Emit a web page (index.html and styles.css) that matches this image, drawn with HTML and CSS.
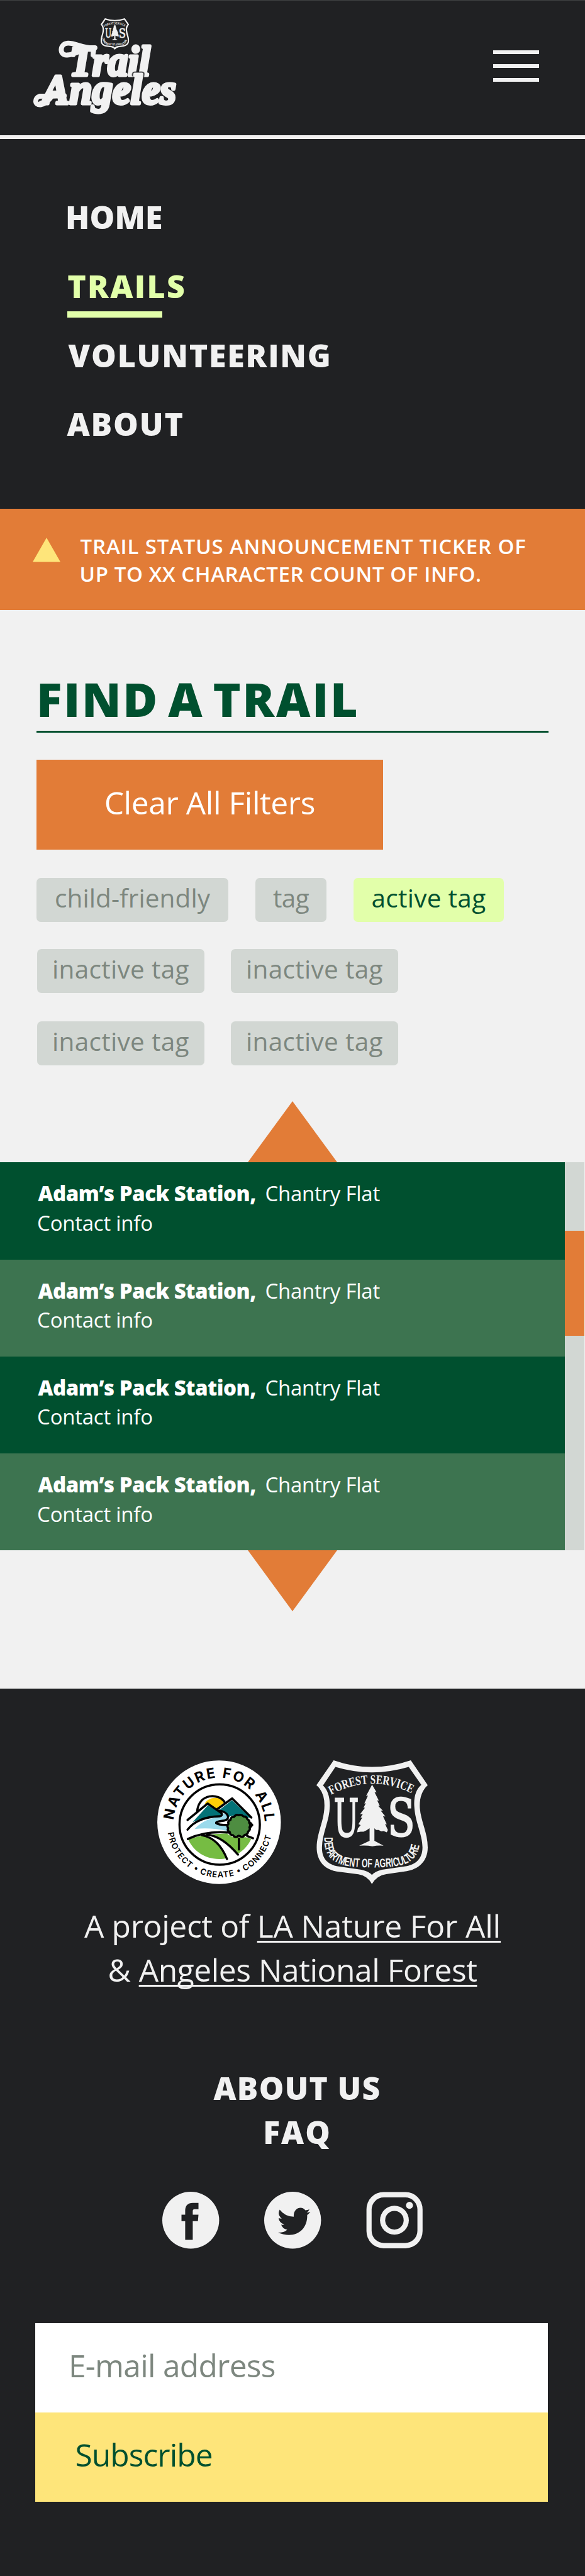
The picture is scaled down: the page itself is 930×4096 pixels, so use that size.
FILE: index.html
```html
<!DOCTYPE html>
<html lang="en">
<head>
<meta charset="utf-8">
<title>Trail Angeles</title>
<link rel="stylesheet" href="styles.css">
</head>
<body>
<svg class="defs" aria-hidden="true">
  <symbol id="shield" viewBox="122 104 762 846" preserveAspectRatio="none">
    <path fill-rule="evenodd" d="M240 104Q500 195 768 104L884 274Q824 330 830 430C836 520 884 600 884 700C884 800 815 850 740 862L600 883Q535 893 502 950Q470 893 410 884L260 864C175 850 124 790 124 700C124 600 176 520 177 415Q178 320 122 274ZM252 149Q500 224 754 149L840 272Q785 320 792 420C798 530 848 610 848 700C848 780 800 815 740 828L570 852Q525 862 502 888Q480 862 430 852L260 828C190 810 160 770 160 700C162 600 212 520 214 415Q214 320 167 276Z"/>
    <path d="M503 271L534 323L520 322L549 379L538 378L556 416L545 416L577 448L562 448L594 488L578 487L604 543L592 540L611 580L604 596L582 588L566 590L548 580L530 580L519 568V655L582 688Q545 684 505 692Q465 684 415 688L486 655V568L465 582L445 592L425 592L400 597L406 570L425 547L410 541L436 495L424 497L440 470L420 474L455 428L444 430L460 398L450 400L475 345L462 348Z"/>
    <text class="mark-letter" x="241" y="626" textLength="170" lengthAdjust="spacingAndGlyphs">U</text>
    <text class="mark-letter" x="608" y="626" textLength="188" lengthAdjust="spacingAndGlyphs">S</text>
    <path id="arc-top" fill="none" d="M222 340Q505 188 794 340"/>
    <path id="arc-bottom" fill="none" d="M176 630C170 760 235 800 310 822C400 842 610 842 700 822C785 800 838 750 832 600"/>
    <text class="mark-text"><textPath href="#arc-top" textLength="575" lengthAdjust="spacingAndGlyphs">FOREST SERVICE</textPath></text>
    <text class="mark-text mark-text-tight"><textPath href="#arc-bottom" textLength="850" lengthAdjust="spacingAndGlyphs">DEPARTMENT OF AGRICULTURE</textPath></text>
  </symbol>
</svg>

<header class="header">
  <svg class="logo" viewBox="70 62 992 670" role="img" aria-label="Trail Angeles">
    <svg x="538" y="66" width="196" height="216"><use href="#shield"/></svg>
    <g class="script">
      <path class="swash" d="M500 268C420 275 370 235 315 237C255 240 255 325 310 318C345 315 365 305 395 292"/>
      <text x="325" y="456" textLength="552" lengthAdjust="spacingAndGlyphs">Trail</text>
      <g class="lower">
        <path class="swash" d="M290 596C210 602 160 598 122 600C85 610 85 662 128 658C165 652 190 620 205 600"/>
        <text x="140" y="652" textLength="915" lengthAdjust="spacingAndGlyphs">Angeles</text>
      </g>
    </g>
  </svg>
  <button class="menu" aria-label="Menu"><i></i><i></i><i></i></button>
</header>

<nav class="nav">
  <a class="n-home">HOME</a>
  <a class="n-trails active">TRAILS</a>
  <a class="n-vol">VOLUNTEERING</a>
  <a class="n-about">ABOUT</a>
</nav>

<div class="ticker">
  <svg class="alert" viewBox="0 0 44 38" preserveAspectRatio="none"><path d="M22 0L44 38H0Z"/></svg>
  <p><span>TRAIL STATUS ANNOUNCEMENT TICKER OF</span><span class="second">UP TO XX CHARACTER COUNT OF INFO.</span></p>
</div>

<main>
  <section class="find">
    <h1>FIND A TRAIL</h1>
    <button class="clear">Clear All Filters</button>
    <div class="tags first"><span class="tag t1">child-friendly</span><span class="tag t2">tag</span><span class="tag t3 on">active tag</span></div>
    <div class="tags"><span class="tag">inactive tag</span><span class="tag">inactive tag</span></div>
    <div class="tags last"><span class="tag">inactive tag</span><span class="tag">inactive tag</span></div>
  </section>
  <svg class="arrow" viewBox="0 0 142 97" preserveAspectRatio="none"><path d="M71 0L142 97H0Z"/></svg>
  <section class="results">
    <ul>
      <li><p><b>Adam’s Pack Station,</b>Chantry Flat</p><p class="info">Contact info</p></li>
      <li><p><b>Adam’s Pack Station,</b>Chantry Flat</p><p class="info">Contact info</p></li>
      <li><p><b>Adam’s Pack Station,</b>Chantry Flat</p><p class="info">Contact info</p></li>
      <li><p><b>Adam’s Pack Station,</b>Chantry Flat</p><p class="info">Contact info</p></li>
    </ul>
    <div class="track"><div class="thumb"></div></div>
  </section>
  <svg class="arrow" viewBox="0 0 142 97" preserveAspectRatio="none"><path d="M0 0H142L71 97Z"/></svg>
</main>

<footer class="footer">
  <div class="partners">
    <svg class="nature" viewBox="85 102 846 848" role="img" aria-label="Nature For All">
      <circle cx="508" cy="526" r="423" fill="#fff"/>
      <path id="n-top" fill="none" d="M197 512A312 312 0 0 1 820 520"/>
      <path id="n-bot" fill="none" d="M157 598A359.700 359.700 0 0 0 869 594"/>
      <text class="n-title"><textPath href="#n-top" textLength="948">NATURE FOR ALL</textPath></text>
      <text class="n-sub"><textPath href="#n-bot" textLength="1000">PROTECT • CREATE • CONNECT</textPath></text>
      <path fill="#76bc43" d="M297 645Q390 608 560 603L600 628H690L728 640C690 725 600 778 508 778C410 778 335 725 297 645Z"/>
      <path fill="#fff" d="M380 615L440 606Q540 630 640 748L560 778Q515 640 380 615Z"/>
      <path fill="#fecf08" d="M410 400C430 350 520 345 545 390L490 435L430 398Z"/>
      <path fill="#037277" d="M432 410L525 465L525 485Q410 485 327 525ZM596 375L725 497L600 480L575 490C570 465 545 455 510 442Z"/>
      <path fill="#9adaeb" d="M340 572Q410 495 530 487L530 466C570 465 580 505 545 515C515 520 480 525 487 532Q500 545 565 545V585Q450 560 340 572Z"/>
      <g class="ink">
        <circle cx="512" cy="542" r="275"/>
        <path d="M357 455C370 320 510 330 545 388M292 511L350 463L430 398L522 462C532 476 525 485 512 485C410 488 335 520 292 577M495 437L597 363L729 494M510 447C570 455 590 505 545 514C515 519 485 521 488 532Q500 545 565 545M294 641C380 600 480 588 580 597M390 615Q505 635 562 778M425 610C510 620 580 680 637 748M644 638V713M700 620L740 636M722 530L735 545L722 560"/>
        <path fill="#4e8d41" d="M640 478Q660 470 675 486Q698 486 700 504Q718 512 714 530Q728 545 716 560Q724 580 706 590Q706 612 684 612Q672 632 656 624Q640 612 632 626Q612 632 604 616Q580 614 582 594Q562 584 570 566Q558 550 572 538Q566 516 586 510Q590 486 610 490Q624 470 640 478Z"/>
      </g>
    </svg>
    <svg class="badge" role="img" aria-label="Forest Service, Department of Agriculture"><use href="#shield"/></svg>
  </div>
  <p class="credit"><span class="l0">A project of </span><a class="l1">LA Nature For All</a><br>&amp; <a class="l2">Angeles National Forest</a></p>
  <div class="links"><a>ABOUT US</a><a class="faq">FAQ</a></div>
  <div class="social">
    <svg viewBox="71 114 308 389" preserveAspectRatio="none"><ellipse cx="225" cy="308.5" rx="154" ry="194.5"/><path class="dark" d="M195 443V315H175V271H195V240Q197 190 236 190H267V233H246Q236 234 236 246V271H267L264 315H236V443Z"/></svg>
    <svg viewBox="623 114 308 389" preserveAspectRatio="none"><ellipse cx="777" cy="308.5" rx="154" ry="194.5"/><path class="dark" d="M707 237Q735 284 783 285C780 222 828 209 846 241Q858 240 868 234Q864 246 853 256Q864 256 873 252Q866 264 856 273C858 380 790 440 697 394Q728 395 748 374Q722 368 715 339Q724 342 732 339Q703 325 701 294Q710 299 718 298Q692 270 707 237Z"/></svg>
    <svg viewBox="1175 113 308 389" preserveAspectRatio="none"><rect x="1177" y="115" width="304" height="385" rx="92" ry="118"/><rect class="dark" x="1205" y="152" width="248" height="312" rx="66" ry="84"/><ellipse cx="1328.500" cy="308" rx="78" ry="99"/><ellipse class="dark" cx="1328.500" cy="308" rx="50" ry="64"/><ellipse cx="1410" cy="206" rx="19" ry="24"/></svg>
  </div>
  <form class="signup">
    <div class="email">E-mail address</div>
    <div class="subscribe">Subscribe</div>
  </form>
</footer>
</body>
</html>
```
FILE: styles.css
```css
* { box-sizing: border-box; margin: 0; padding: 0; }
body { width: 930px; background: #f1f1f1; font-family: "Open Sans", "Noto Sans", sans-serif; font-size: 49.700px; color: #f1f1f1; overflow-x: hidden; }
button { border: 0; background: none; font: inherit; }
svg { display: block; overflow: visible; }
.defs { position: absolute; width: 0; height: 0; }

/* header */
.header { height: 221px; background: #202123; border-top: 1px solid #404243; border-bottom: 6px solid #f1efef; display: flex; justify-content: space-between; align-items: flex-start; padding: 27px 73px 0 51px; }
.logo { width: 230.600px; height: 155.700px; fill: #f1f1f1; }
.script { font-family: "Liberation Serif", serif; font-weight: 700; font-style: italic; font-size: 290px; stroke: #f1f1f1; stroke-width: 21; stroke-linejoin: round; stroke-linecap: round; }
.lower { filter: drop-shadow(7px -3px 0 #202123) drop-shadow(-7px -3px 0 #202123); }
.script .swash { fill: none; stroke-width: 34; }
.mark-letter { font-family: "DejaVu Serif", serif; font-size: 352px; stroke: #f1f1f1; stroke-width: 10; }
.mark-text { font-family: "Liberation Serif", serif; font-weight: 700; font-size: 88px; }
.mark-text-tight { font-family: "Liberation Sans", sans-serif; font-size: 84px; }
.menu { width: 73px; padding-top: 52px; display: flex; flex-direction: column; gap: 16px; }
.menu i { height: 6px; background: #f1f1f1; }

/* navigation */
.nav { height: 588.300px; background: #202123; padding: 70.400px 0 0 106.500px; display: flex; flex-direction: column; font-weight: 800; font-size: 50px; line-height: 109.600px; letter-spacing: 1.800px; }
.n-home { margin-left: -2.500px; letter-spacing: .2px; }
.n-vol { padding-left: 2px; }
.active { position: relative; color: #e2ffaa; padding-left: .7px; letter-spacing: 2.300px; }
.active::after { content: ""; position: absolute; left: 0; top: 94.500px; width: 151px; height: 9.500px; background: #e2ffaa; }

/* ticker */
.ticker { height: 161px; background: #e27c37; color: #fff; display: flex; padding: 37.300px 0 0 51.600px; font-weight: 600; font-size: 33px; line-height: 44px; letter-spacing: .83px; }
.alert { width: 44px; height: 38.500px; margin: 8.500px 32px 0 0; fill: #fee57a; }
.ticker span { display: block; white-space: nowrap; }
.ticker .second { margin-left: -1px; letter-spacing: .6px; }

/* filters */
.find { padding: 91.100px 58.500px 57.800px 58.100px; color: #00502f; }
h1 { font-weight: 800; font-size: 75px; line-height: 100px; letter-spacing: 2.700px; word-spacing: -8px; padding-bottom: .5px; border-bottom: 3px solid #00502f; white-space: nowrap; }
.clear { display: block; width: 550.500px; height: 142.600px; margin-top: 43.500px; padding-bottom: 7px; background: #e27c37; color: #fff; letter-spacing: -.41px; }
.tags { display: flex; gap: 42.700px; margin: 43.200px 0 0 1.200px; }
.tags.first { gap: 43.300px; margin: 44.600px 0 0; }
.tags.last { margin-top: 44.900px; }
.tag { width: 265.300px; height: 70px; line-height: 64px; border-radius: 7px; background: #d2d7d3; color: #7d877f; font-size: 40.500px; letter-spacing: .3px; text-align: center; white-space: nowrap; }
.t1 { width: 304.900px; letter-spacing: .1px; }
.t2 { width: 112.700px; letter-spacing: -.5px; }
.t3 { width: 238.400px; }
.on { background: #e2ffaa; color: #00502f; }

/* results */
.arrow { width: 142px; height: 97px; margin: 0 auto; fill: #e27c37; }
.results { display: flex; }
ul { list-style: none; width: 897.500px; }
li { height: 154.200px; background: #00502f; color: #fff; padding: 27px 0 0 60.500px; font-size: 33px; line-height: 46.600px; letter-spacing: -.25px; }
li:nth-child(even) { background: #3d7450; }
b { display: inline-block; width: 361px; font-weight: 800; letter-spacing: -.49px; white-space: nowrap; }
.info { margin-left: -1.400px; }
.track { width: 31px; background: #d2d7d3; padding-top: 108.300px; }
.thumb { height: 167.600px; background: #e27c37; }

/* footer */
.footer { margin-top: 122.900px; height: 1411px; background: #202123; padding-top: 113.500px; }
.partners { display: flex; justify-content: center; gap: 56px; }
.nature { width: 196.600px; height: 196.900px; }
.n-title { font-family: Inter, sans-serif; font-weight: 700; font-size: 97px; }
.n-sub { font-family: Inter, sans-serif; font-weight: 600; font-size: 56px; }
.ink { fill: none; stroke: #000; stroke-width: 15; stroke-linecap: round; stroke-linejoin: round; }
.badge { width: 177px; height: 196.700px; fill: #f1f1f1; }
.credit { margin-top: 32.900px; text-align: center; line-height: 69.800px; white-space: nowrap; }
.credit a { text-decoration: underline; text-decoration-thickness: 2.800px; text-underline-offset: 5px; text-decoration-skip-ink: none; }
.l0 { letter-spacing: -.35px; }
.l1 { letter-spacing: -.15px; }
.l2 { letter-spacing: -.43px; }
.links { margin-top: 118.500px; padding-left: 15px; display: flex; flex-direction: column; align-items: center; font-weight: 800; line-height: 69.800px; letter-spacing: 1.360px; }
.faq { letter-spacing: 2px; }
.social { margin-top: 58.500px; display: flex; justify-content: center; gap: 71.600px; fill: #f1f1f1; }
.social svg { width: 90.400px; height: 90.400px; }
.dark { fill: #202123; }
.signup { margin: 118.700px 58.600px 0 56.400px; line-height: 134.400px; }
.email { height: 142.400px; background: #fff; color: #7d877f; padding-left: 52.500px; letter-spacing: -.74px; }
.subscribe { height: 142.300px; background: #fee57a; color: #00502f; padding-left: 63px; font-weight: 500; letter-spacing: -.94px; }
```
